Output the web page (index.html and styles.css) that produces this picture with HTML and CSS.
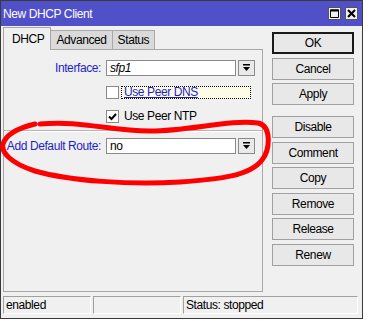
FILE: index.html
```html
<!DOCTYPE html>
<html lang="en">
<head>
    <meta charset="UTF-8">
    <title>New DHCP Client</title>
    <link rel="stylesheet" href="styles.css">
</head>
<body>
    <div class="window">
        <div class="titlebar">
            <span class="title">New DHCP Client</span>
            <div class="title-btns">
                <span class="tbtn">
                    <svg width="9" height="9" viewBox="0 0 9 9"><path d="M0.5 1h8v7.5h-8z" fill="none" stroke="#000"/><rect x="0" y="0.5" width="9" height="2" fill="#000"/></svg>
                </span>
                <span class="tbtn">
                    <svg width="9" height="9" viewBox="0 0 9 9"><path d="M1 1L8 8M8 1L1 8" stroke="#000" stroke-width="2"/></svg>
                </span>
            </div>
        </div>

        <div class="body">
            <div class="main">
                <div class="tabs">
                    <div class="tab active">DHCP</div>
                    <div class="tab">Advanced</div>
                    <div class="tab">Status</div>
                </div>
                <div class="panel">
                    <div class="row">
                        <span class="lbl">Interface:</span>
                        <span class="field italic">sfp1</span>
                        <span class="drop"><svg width="9" height="8" viewBox="0 0 9 8"><path d="M1 0h7v1.5H1zM1 3h7L4.5 7z" fill="#000"/></svg></span>
                    </div>
                    <div class="row">
                        <span></span>
                        <span class="check-wrap"><span class="box"></span><span class="focus">Use Peer DNS</span></span>
                    </div>
                    <div class="row">
                        <span></span>
                        <span class="check-wrap"><span class="box"><svg width="11" height="11" viewBox="0 0 11 11"><path d="M2 5.5l2.5 2.5 4.5-5" fill="none" stroke="#000" stroke-width="2"/></svg></span><span class="cap">Use Peer NTP</span></span>
                    </div>
                    <div class="sep"></div>
                    <div class="row">
                        <span class="lbl">Add Default Route:</span>
                        <span class="field">no</span>
                        <span class="drop"><svg width="9" height="8" viewBox="0 0 9 8"><path d="M1 0h7v1.5H1zM1 3h7L4.5 7z" fill="#000"/></svg></span>
                    </div>
                </div>
            </div>

            <div class="buttons">
                <div class="btn default">OK</div>
                <div class="btn">Cancel</div>
                <div class="btn">Apply</div>
                <div class="btn spaced">Disable</div>
                <div class="btn">Comment</div>
                <div class="btn">Copy</div>
                <div class="btn">Remove</div>
                <div class="btn">Release</div>
                <div class="btn">Renew</div>
            </div>
        </div>

        <div class="statusbar">
            <div class="cell c1">enabled</div>
            <div class="cell c2"></div>
            <div class="cell c3">Status: stopped</div>
        </div>

        <!-- hand drawn mark over the route row -->
        <svg class="scribble" width="363" height="319" viewBox="0 0 363 319">
            <path d="M40 124 C80 120 110 131 150 131 C190 131 230 119 258 123 C272 126 270 150 262 160 C250 176 220 179 180 182 C130 185 70 181 35 171 C10 163 1 152 3 144 C6 134 18 128 35 124" fill="none" stroke="#f00" stroke-width="5" stroke-linecap="round"/>
        </svg>
    </div>
</body>
</html>
```

FILE: styles.css
```css
body {
    margin: 0;
    background-color: #ffffff;
    font-family: "Liberation Sans", Arial, sans-serif;
    font-size: 12px;
    letter-spacing: -0.4px;
    color: #000;
}

.window {
    position: relative;
    box-sizing: border-box;
    width: 363px;
    height: 319px;
    border: 1px solid #3a3a3a;
    background-color: #f0f0f0;
}

.titlebar {
    height: 25px;
    background-color: #5050c8;
    display: flex;
    align-items: center;
    justify-content: space-between;
    padding: 0 4px 0 2px;
    color: #fff;
}

.title-btns {
    display: flex;
    gap: 4px;
}

.tbtn {
    box-sizing: border-box;
    width: 13px;
    height: 13px;
    background-color: #f0f0f0;
    border: 1px solid #555;
    display: flex;
    align-items: center;
    justify-content: center;
}

.body {
    display: flex;
    padding: 1px 0 0 2px;
}

.main {
    width: 260px;
}

.tabs {
    height: 22px;
    display: flex;
    align-items: flex-end;
}

.tab {
    box-sizing: border-box;
    height: 19px;
    line-height: 18px;
    padding: 0 5px;
    background-color: #dadada;
    border: 1px solid #a8a8a8;
    border-bottom: none;
}

.tab + .tab {
    margin-left: -1px;
}

.tab.active {
    position: relative;
    z-index: 1;
    height: 23px;
    margin-bottom: -1px;
    line-height: 22px;
    padding: 0 6px 0 8px;
    background-color: #f0f0f0;
}

.panel {
    box-sizing: border-box;
    height: 243px;
    border: 1px solid #a8a8a8;
    padding-top: 6px;
}

.row {
    height: 24px;
    display: grid;
    grid-template-columns: 97px 130px 17px;
    column-gap: 5px;
    align-items: center;
}

.row .drop {
    margin-left: -3px;
}

.lbl {
    text-align: right;
    color: #1e1ec8;
    white-space: nowrap;
}

.field {
    box-sizing: border-box;
    height: 16px;
    line-height: 14px;
    padding-left: 3px;
    background-color: #fff;
    border: 1px solid #8a8a8a;
}

.italic {
    font-style: italic;
}

.drop {
    box-sizing: border-box;
    width: 17px;
    height: 16px;
    background-color: #e9e9e9;
    border: 1px solid #8a8a8a;
    display: flex;
    align-items: center;
    justify-content: center;
}

.check-wrap {
    display: flex;
    align-items: center;
    grid-column: 2 / 4;
}

.box {
    box-sizing: border-box;
    width: 13px;
    height: 13px;
    background-color: #fff;
    border: 1px solid #8a8a8a;
    display: flex;
    align-items: center;
    justify-content: center;
}

.focus {
    box-sizing: border-box;
    width: 130px;
    height: 13px;
    line-height: 11px;
    margin-left: 2px;
    padding-left: 2px;
    border: 1px dotted #000;
    background-color: #fbfbe6;
    color: #1e1ec8;
    text-decoration: underline;
}

.cap {
    margin-left: 5px;
}

.sep {
    margin: 2px 0;
    border-top: 1px solid #b4b4b4;
    border-bottom: 1px solid #fff;
}

.buttons {
    width: 82px;
    margin-left: 9px;
    margin-top: 5px;
    display: flex;
    flex-direction: column;
    gap: 3.5px;
}

.btn {
    box-sizing: border-box;
    height: 22px;
    line-height: 20px;
    text-align: center;
    background-color: #e8e8e8;
    border: 1px solid #a0a0a0;
}

.btn.default {
    border: 2px solid #1a1a1a;
    line-height: 18px;
}

.btn.spaced {
    margin-top: 7.5px;
}

.statusbar {
    display: flex;
    gap: 2px;
    margin-top: 4px;
    padding-left: 2px;
}

.cell {
    box-sizing: border-box;
    height: 18px;
    line-height: 16px;
    padding-left: 2px;
    border: 1px solid #a0a0a0;
    border-right-color: #fff;
    border-bottom-color: #fff;
}

.c1,
.c2 {
    width: 88px;
}

.c3 {
    width: 175px;
}

.scribble {
    position: absolute;
    left: -1px;
    top: -1px;
    pointer-events: none;
}
```
